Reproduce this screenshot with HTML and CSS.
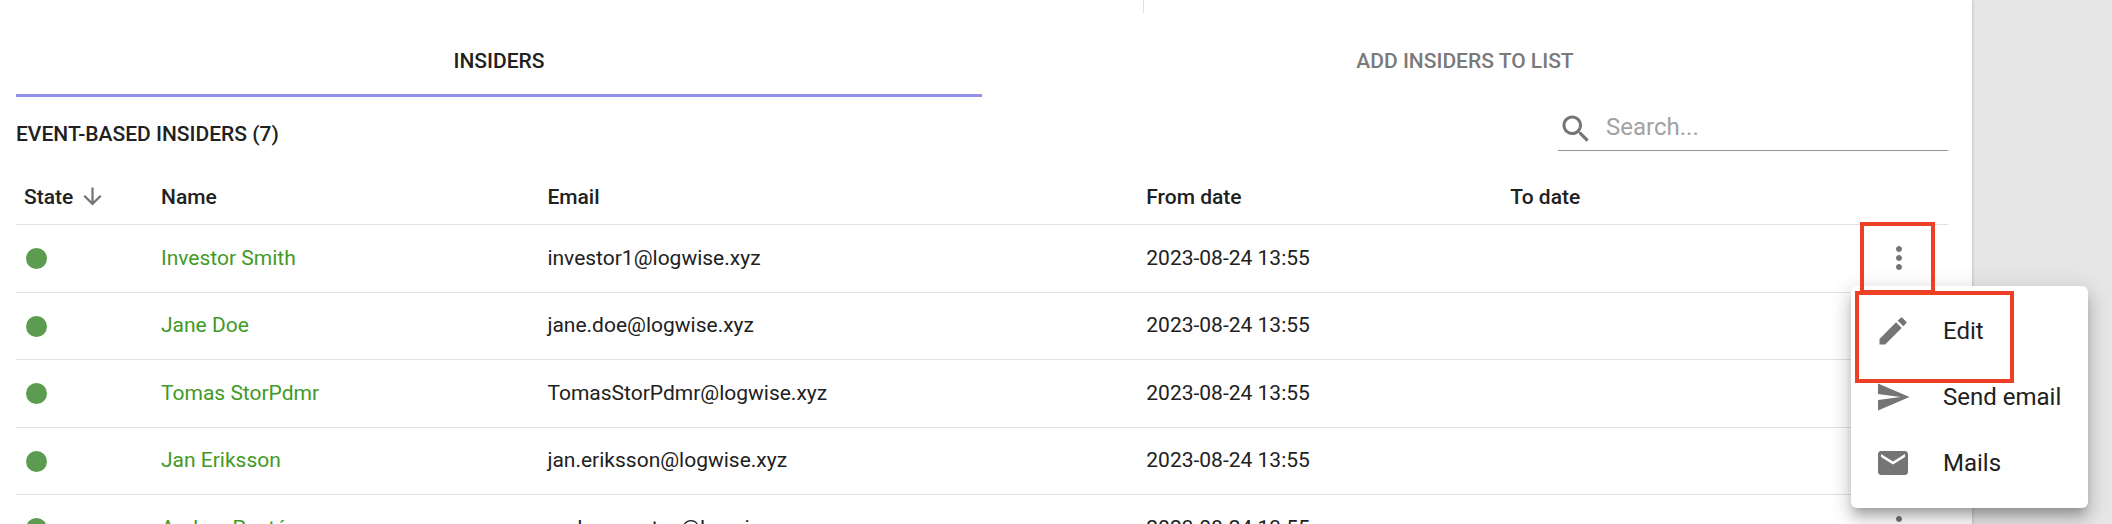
FILE: index.html
```html
<!DOCTYPE html>
<html lang="en">
<head>
  <meta charset="UTF-8" />
  <title>Insiders</title>
  <link rel="stylesheet" href="styles.css">
</head>
<body>
  <main class="paper">
    <div class="split"><span></span></div>

    <div class="tabs" role="tablist">
      <button class="tab active" role="tab" aria-selected="true">INSIDERS</button>
      <button class="tab" role="tab" aria-selected="false">ADD INSIDERS TO LIST</button>
    </div>

    <div class="toolbar">
      <h2>EVENT-BASED INSIDERS (7)</h2>
      <label class="search">
        <svg class="icon" viewBox="0 0 24 24"><path d="M15.5 14h-.79l-.28-.27C15.41 12.59 16 11.11 16 9.5 16 5.91 13.09 3 9.5 3S3 5.91 3 9.5 5.91 16 9.5 16c1.61 0 3.09-.59 4.23-1.57l.27.28v.79l5 4.99L20.49 19l-4.99-5zm-6 0C7.01 14 5 11.99 5 9.5S7.01 5 9.5 5 14 7.01 14 9.5 11.99 14 9.5 14z"/></svg>
        <input type="text" placeholder="Search..." aria-label="Search" />
      </label>
    </div>

    <table>
      <colgroup>
        <col class="col-state"><col class="col-name"><col class="col-email"><col class="col-date"><col>
        <col class="col-actions">
      </colgroup>
      <thead>
        <tr>
          <th><span class="sort">State <svg class="arrow" viewBox="0 0 24 24"><path d="M20 12l-1.41-1.41L13 16.17V4h-2v12.17l-5.58-5.59L4 12l8 8 8-8z"/></svg></span></th>
          <th>Name</th>
          <th>Email</th>
          <th>From date</th>
          <th>To date</th>
          <th></th>
        </tr>
      </thead>
      <tbody>
        <tr>
          <td><span class="dot"></span></td>
          <td><a href="#">Investor Smith</a></td>
          <td>investor1@logwise.xyz</td>
          <td>2023-08-24 13:55</td>
          <td></td>
          <td class="actions">
            <div class="more-wrap">
              <button class="more" aria-label="More"><svg class="icon" viewBox="0 0 24 24"><path d="M12 8c1.1 0 2-.9 2-2s-.9-2-2-2-2 .9-2 2 .9 2 2 2zm0 2c-1.1 0-2 .9-2 2s.9 2 2 2 2-.9 2-2-.9-2-2-2zm0 6c-1.1 0-2 .9-2 2s.9 2 2 2 2-.9 2-2-.9-2-2-2z"/></svg></button>
              <div class="menu" role="menu">
                <button class="item" role="menuitem"><svg class="icon" viewBox="0 0 24 24"><path d="M3 17.25V21h3.75L17.81 9.94l-3.75-3.75L3 17.25zM20.71 7.04c.39-.39.39-1.02 0-1.41l-2.34-2.34c-.39-.39-1.02-.39-1.41 0l-1.83 1.83 3.75 3.75 1.83-1.83z"/></svg>Edit</button>
                <button class="item" role="menuitem"><svg class="icon" viewBox="0 0 24 24"><path d="M2.01 21L23 12 2.01 3 2 10l15 2-15 2z"/></svg>Send email</button>
                <button class="item" role="menuitem"><svg class="icon" viewBox="0 0 24 24"><path d="M20 4H4c-1.1 0-1.99.9-1.99 2L2 18c0 1.1.9 2 2 2h16c1.1 0 2-.9 2-2V6c0-1.1-.9-2-2-2zm0 4l-8 5-8-5V6l8 5 8-5v2z"/></svg>Mails</button>
              </div>
              <span class="mark mark-more"></span>
              <span class="mark mark-edit"></span>
            </div>
          </td>
        </tr>
        <tr>
          <td><span class="dot"></span></td>
          <td><a href="#">Jane Doe</a></td>
          <td>jane.doe@logwise.xyz</td>
          <td>2023-08-24 13:55</td>
          <td></td>
          <td></td>
        </tr>
        <tr>
          <td><span class="dot"></span></td>
          <td><a href="#">Tomas StorPdmr</a></td>
          <td>TomasStorPdmr@logwise.xyz</td>
          <td>2023-08-24 13:55</td>
          <td></td>
          <td></td>
        </tr>
        <tr>
          <td><span class="dot"></span></td>
          <td><a href="#">Jan Eriksson</a></td>
          <td>jan.eriksson@logwise.xyz</td>
          <td>2023-08-24 13:55</td>
          <td></td>
          <td></td>
        </tr>
        <tr>
          <td><span class="dot"></span></td>
          <td><a href="#">Anders Postén</a></td>
          <td>anders.posten@logwise.xyz</td>
          <td>2023-08-24 13:55</td>
          <td></td>
          <td class="actions">
            <div class="more-wrap">
              <button class="more" aria-label="More"><svg class="icon" viewBox="0 0 24 24"><path d="M12 8c1.1 0 2-.9 2-2s-.9-2-2-2-2 .9-2 2 .9 2 2 2zm0 2c-1.1 0-2 .9-2 2s.9 2 2 2 2-.9 2-2-.9-2-2-2zm0 6c-1.1 0-2 .9-2 2s.9 2 2 2 2-.9 2-2-.9-2-2-2z"/></svg></button>
            </div>
          </td>
        </tr>
      </tbody>
    </table>
  </main>
</body>
</html>
```

FILE: styles.css
```css
* { box-sizing: border-box; }
body { margin: 0; height: 100vh; overflow: hidden; background: #e6e6e6; color: #212121; font-family: Roboto, sans-serif; font-size: 21px; line-height: 30px; }
button, input { font: inherit; color: inherit; border: 0; background: none; padding: 0; }
.icon { width: 36px; height: 36px; fill: #757575; display: block; flex: none; }

.paper { margin-right: 140px; min-height: 100vh; padding: 0 24px 0 16px; background: #fff; box-shadow: 0 1px 3px rgba(0, 0, 0, 0.25); }

/* end of the divider between the two panels above */
.split { height: 25px; display: flex; padding-left: 1127px; }
.split span { width: 1px; height: 13px; background: #e0e0e0; }

.tabs { display: flex; }
.tab { flex: 1; height: 72px; font-weight: 500; color: #7a7a7a; border: solid transparent; border-width: 3px 0; }
.tab.active { color: #212121; border-bottom-color: #9191e9; }

.toolbar { display: flex; justify-content: space-between; height: 74px; }
.toolbar h2 { margin: 22px 0 0; font-size: 21px; font-weight: 500; }
.search { display: flex; gap: 12px; width: 390px; height: 54px; padding-top: 14px; border-bottom: 1px solid #949494; }
.search input { flex: 1; min-width: 0; height: 32px; font-size: 24px; outline: 0; }
.search input::placeholder { color: #a2a2a2; opacity: 1; }

table { width: 100%; table-layout: fixed; border-collapse: separate; border-spacing: 0; }
.col-state { width: 137px; }
.col-name { width: 20%; }
.col-email { width: 31%; }
.col-date { width: 364px; }
.col-actions { width: 100px; }
th, td { height: 68px; padding: 0 8px 2px; text-align: left; border-bottom: 1px solid #e0e0e0; white-space: nowrap; }
th { height: 54px; font-weight: 500; }
tr:nth-child(even) td { height: 67px; }
.sort { display: flex; align-items: center; gap: 6px; }
.arrow { width: 27px; height: 27px; fill: #757575; }
.dot { display: block; width: 21px; height: 21px; margin: 2px 0 0 2px; border-radius: 50%; background: #5c9c50; }
a { color: #3f9a26; text-decoration: none; }

.actions { padding: 0 13px 2px 0; }
.more-wrap { position: relative; width: 72px; margin-left: auto; }
.more { display: block; padding: 0 18px; }
.menu { position: absolute; z-index: 1; top: 46px; right: -153px; width: 237px; padding: 12px 0; background: #fff; border-radius: 6px; box-shadow: 0 8px 8px -4px rgba(0, 0, 0, 0.2), 0 12px 15px 1px rgba(0, 0, 0, 0.14), 0 4px 21px 3px rgba(0, 0, 0, 0.12); }
.item { display: flex; align-items: center; gap: 32px; width: 100%; height: 66px; padding: 0 24px; font-size: 24px; }

.mark { position: absolute; z-index: 2; border: 4px solid #ee4026; pointer-events: none; }
.mark-more { top: -18px; left: -3px; width: 75px; height: 72px; }
.mark-edit { top: 51px; left: -8px; width: 159px; height: 92px; }
```
